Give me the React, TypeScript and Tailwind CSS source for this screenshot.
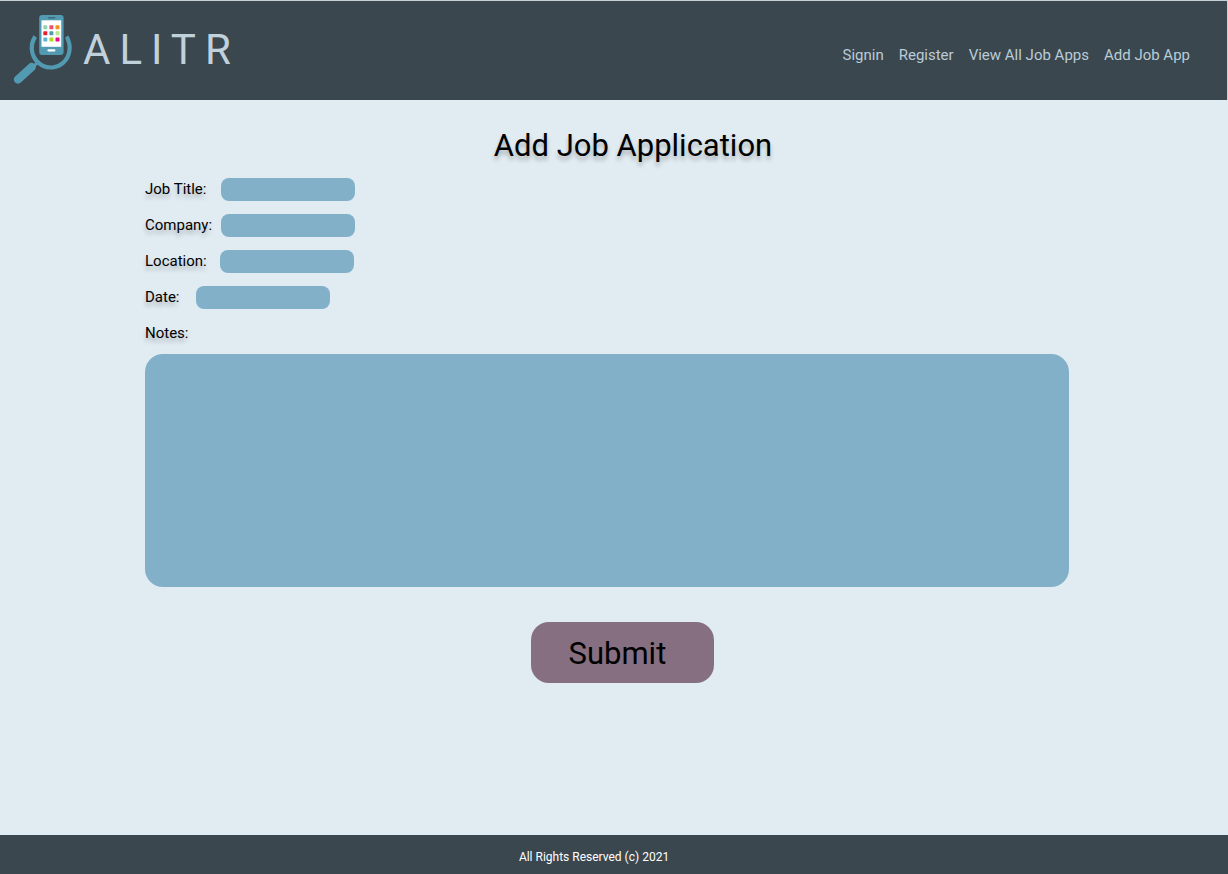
const navLinks = ['Signin', 'Register', 'View All Job Apps', 'Add Job App'];

const fields = [
  { id: 'title', label: 'Job Title:', labelWidth: 'w-[76px]' },
  { id: 'company', label: 'Company:', labelWidth: 'w-[76px]' },
  { id: 'location', label: 'Location:', labelWidth: 'w-[75px]' },
  { id: 'date', label: 'Date:', labelWidth: 'w-[51px]' },
];

const appTiles = [
  ['#8fd6b0', '#f0506e', '#f39322'],
  ['#e8202e', '#4f9db5', '#b5e887'],
  ['#5fb3d4', '#a8dc1e', '#ee0a78'],
];

function Logo() {
  return (
    <svg width="60" height="70" viewBox="13 14 60 70" aria-hidden="true">
      <path
        d="M35.2 36.5C28.5 47 32 60.5 43 65.8C50 69 58 67.500 63.500 62.500C70.500 56 71.500 45 66.500 36.500"
        fill="none"
        stroke="#529ab2"
        strokeWidth="4.200"
      />
      <path d="M33 67L37.500 62.500" stroke="#529ab2" strokeWidth="3" />
      <path d="M18 79.500L31.700 67" stroke="#529ab2" strokeWidth="8.400" strokeLinecap="round" />
      <rect x="37.600" y="13.800" width="27.600" height="42.600" rx="4" fill="#3b474e" />
      <rect x="39.200" y="15" width="24.400" height="40" rx="3" fill="#529ab2" />
      <rect x="41.500" y="20.300" width="19.700" height="26.500" fill="#fff" />
      <rect x="48" y="17" width="7.400" height="1.500" rx=".7" fill="#3b6b7c" />
      <rect x="47.400" y="49.200" width="8" height="2.400" rx="1" fill="#fff" />
      {appTiles.map((row, y) =>
        row.map((color, x) => (
          <rect
            key={color}
            x={43.3 + x * 6.1}
            y={25.2 + y * 6.1}
            width="4"
            height="4"
            rx=".7"
            fill={color}
          />
        )),
      )}
    </svg>
  );
}

export default function App() {
  return (
    <div className="flex min-h-screen flex-col bg-[#e1ecf2] font-[Roboto,sans-serif] text-black">
      <header className="flex h-[100px] items-start justify-between border-t border-r border-[#c8d0d4] bg-[#3b474e] pr-[37px] pl-[13px]">
        <a href="#" className="flex items-start gap-[10px] pt-[13px]">
          <Logo />
          <span className="text-[42px] leading-[72px] tracking-[9px] text-[#c1d1dc]">ALITR</span>
        </a>
        <nav className="flex gap-[15px] pt-[42px] text-[15px] leading-6 text-[#b9ccd8]">
          {navLinks.map((label) => (
            <a key={label} href="#">
              {label}
            </a>
          ))}
        </nav>
      </header>

      <main className="flex-1 pt-[26px] pr-[159px] pl-[145px]">
        <h1 className="pl-[52px] text-center text-[31px] leading-10 text-shadow-[0_4px_4px_rgb(0_0_0/0.25)]">
          Add Job Application
        </h1>
        <form className="pt-[5px]" onSubmit={(event) => event.preventDefault()}>
          {fields.map((field) => (
            <div key={field.id} className="flex h-9 items-center">
              <label
                htmlFor={field.id}
                className={`${field.labelWidth} shrink-0 text-[15px] text-shadow-[0_4px_4px_rgb(0_0_0/0.25)]`}
              >
                {field.label}
              </label>
              <input
                id={field.id}
                type="text"
                className="h-[23px] w-[134px] rounded-lg bg-[#82b0c9] px-2 text-sm"
              />
            </div>
          ))}
          <label
            htmlFor="notes"
            className="block text-[15px] leading-9 text-shadow-[0_4px_4px_rgb(0_0_0/0.25)]"
          >
            Notes:
          </label>
          <textarea
            id="notes"
            className="mt-[3px] block h-[233px] w-full resize-none rounded-[18px] bg-[#82b0c9] p-4 text-[15px]"
          />
          <div className="flex justify-center pt-[35px] pl-[30px]">
            <button
              type="submit"
              className="w-[183px] rounded-[18px] bg-[#866f80] pt-[12px] pb-[9px] pl-[38px] text-left text-[31px] leading-10"
            >
              Submit
            </button>
          </div>
        </form>
      </main>

      <footer className="bg-[#3b474e] pt-[13px] pr-[40px] pb-[7px] text-center text-xs leading-[19px] text-white">
        All Rights Reserved (c) 2021
      </footer>
    </div>
  );
}
